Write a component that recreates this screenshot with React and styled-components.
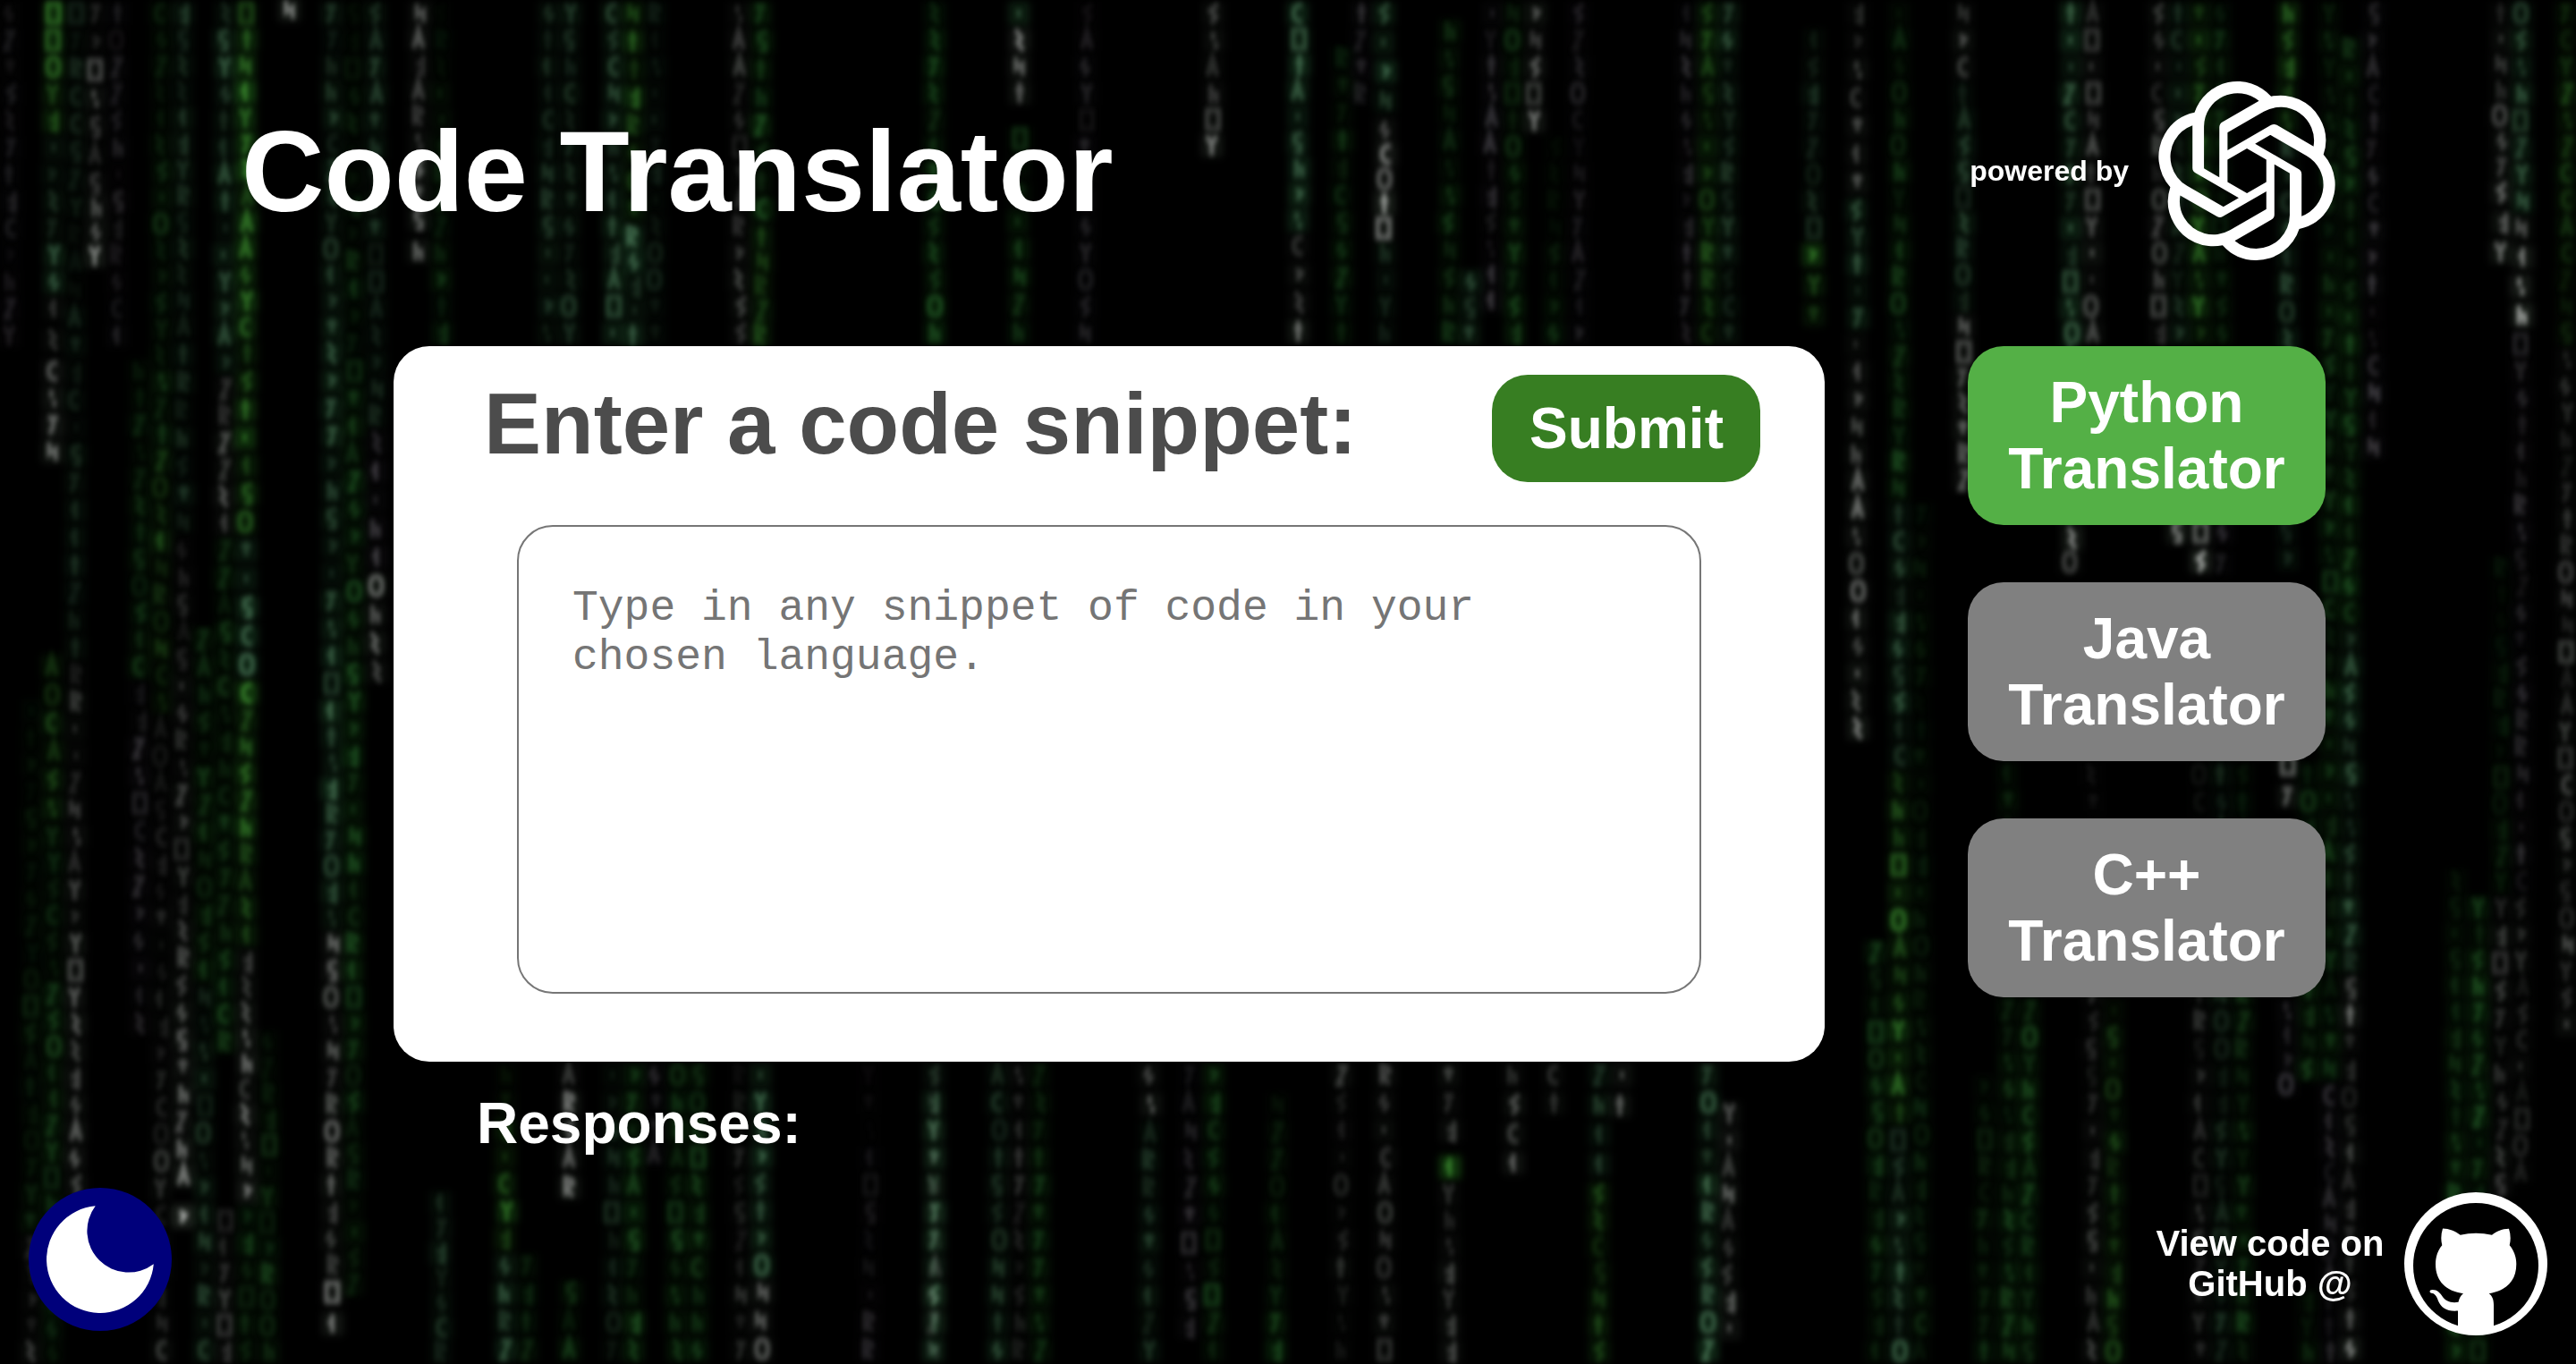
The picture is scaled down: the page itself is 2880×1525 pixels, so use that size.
import React, { useMemo } from 'react';
import styled, { createGlobalStyle } from 'styled-components';
import { SiOpenai } from 'react-icons/si';

const GlobalStyle = createGlobalStyle`
  * { box-sizing: border-box; }
  body {
    margin: 0;
    background: #000;
    font-family: "Liberation Sans", Arial, sans-serif;
    font-weight: 700;
    color: #fff;
  }
`;

const Page = styled.div`
  position: relative;
  isolation: isolate;
  display: flex;
  flex-direction: column;
  width: 2880px;
  height: 1525px;
  overflow: hidden;
`;

const RainCanvas = styled.svg`
  position: absolute;
  inset: 0;
  z-index: -1;
  width: 2880px;
  height: 1525px;
`;

const Header = styled.header`
  display: flex;
  align-items: center;
  justify-content: space-between;
  height: 387px;
  padding: 0 268px 5px 270px;
`;

const Title = styled.h1`
  margin: 0;
  padding-top: 1px;
  font-size: 128px;
  line-height: 147px;
`;

const PoweredBy = styled.div`
  display: flex;
  align-items: center;
  gap: 32px;
  font-size: 32px;
  line-height: 37px;
`;

const OpenAiLogo = styled(SiOpenai)`
  width: 200px;
  height: 200px;
`;

const Main = styled.main`
  display: flex;
  gap: 160px;
  padding-left: 440px;
`;

const Card = styled.section`
  display: flex;
  flex-direction: column;
  width: 1600px;
  height: 800px;
  padding: 32px 72px 0 98px;
  border-radius: 40px;
  background: #fff;
`;

const CardTop = styled.div`
  display: flex;
  justify-content: space-between;
  align-items: flex-start;
  height: 168px;
`;

const CardTitle = styled.h2`
  margin: 0;
  padding-left: 3px;
  font-size: 96px;
  line-height: 110px;
  color: #4c4c4c;
`;

const SubmitButton = styled.button`
  width: 300px;
  height: 120px;
  padding: 0 0 0 1px;
  border: 0;
  border-radius: 40px;
  background: #377e22;
  color: #fff;
  font: inherit;
  font-size: 64px;
`;

const CodeInput = styled.textarea`
  display: block;
  width: 1324px;
  height: 524px;
  margin: 0 0 0 40px;
  padding: 64px 60px 60px;
  border: 2px solid #767676;
  border-radius: 40px;
  background: #fff;
  resize: none;
  outline: none;
  overflow: hidden;
  font: 400 48px/55px "Courier New", "Liberation Mono", monospace;
  &::placeholder { color: #757575; opacity: 1; }
`;

const Languages = styled.nav`
  display: flex;
  flex-direction: column;
  gap: 64px;
`;

const LanguageButton = styled.button`
  width: 400px;
  height: 200px;
  padding: 0 40px;
  border: 0;
  border-radius: 40px;
  background: ${(p) => (p.$active ? '#54b046' : '#808080')};
  color: #fff;
  font: inherit;
  font-size: 64px;
  line-height: 74px;
`;

const Responses = styled.h3`
  margin: 32px 0 0 533px;
  font-size: 64px;
  line-height: 74px;
`;

const Footer = styled.footer`
  display: flex;
  justify-content: space-between;
  padding: 35px 32px 0;
`;

const ThemeToggle = styled.button`
  width: 160px;
  height: 160px;
  padding: 0;
  border: 0;
  border-radius: 50%;
  background: #00007b;
  svg { display: block; }
`;

const RepoLink = styled.a`
  display: flex;
  align-items: center;
  gap: 22px;
  height: 160px;
  margin-top: 5px;
`;

const RepoText = styled.span`
  width: 256px;
  font-size: 40px;
  line-height: 45px;
  text-align: center;
`;

/* Tints of the falling characters */
const TINT = {
  g: '#3c8a30',
  t: '#4d7a5a',
  d: '#245c28',
  w: '#b4b6b4',
  p: '#7c7880',
};

/* Glow behind the characters */
const GLOW = {
  g: '#1c5a16',
  t: '#1b4426',
  d: '#0f3c10',
  w: '#2a322a',
  p: '#1c1a20',
};

/* [x, [top, bottom, tint, opacity at top, opacity at bottom], ...] */
const STREAMS = [
  [11, [0, 390, 'p', 0.3, 0.25]],
  [35, [1380, 1525, 'w', 0.2, 0.4], [780, 1380, 'd', 0.15, 0.4]],
  [59, [0, 150, 'g', 0.9, 0.7], [150, 330, 't', 0.5, 0.6], [330, 400, 'w', 0.5, 0.6], [400, 520, 'w', 0.8, 1.1], [730, 920, 'g', 0.3, 0.6], [920, 1390, 'd', 0.5, 0.6], [1390, 1525, 'd', 0.5, 0.3]],
  [84, [0, 340, 't', 0.3, 0.15], [340, 740, 't', 0.25, 0.5], [740, 1340, 'w', 0.3, 0.65]],
  [107, [0, 190, 'w', 0.3, 0.5], [190, 298, 'w', 0.65, 1.05]],
  [131, [0, 390, 'p', 0.25, 0.35]],
  [156, [400, 760, 'd', 0.3, 0.5], [760, 1160, 'p', 0.4, 0.45]],
  [180, [0, 500, 'd', 0.3, 0.6], [500, 800, 'g', 0.5, 0.3], [800, 1525, 'w', 0.15, 0.35]],
  [204, [0, 350, 't', 0.4, 0.3], [350, 600, 't', 0.25, 0.5], [600, 1330, 'w', 0.2, 0.7], [1345, 1375, 'w', 1.5, 1.5]],
  [228, [700, 1100, 'd', 0.4, 0.6], [1100, 1525, 't', 0.4, 0.5]],
  [251, [0, 420, 't', 0.65, 0.55], [420, 600, 'w', 0.5, 0.6], [600, 1180, 'd', 0.5, 0.6], [1350, 1525, 'w', 0.3, 0.5]],
  [275, [0, 380, 'g', 0.95, 0.8], [380, 600, 'g', 0.75, 0.9], [600, 760, 't', 0.8, 0.8], [760, 1060, 'g', 0.95, 0.6], [1060, 1345, 'w', 0.5, 0.7], [1345, 1525, 'd', 0.6, 0.5]],
  [300, [1150, 1525, 'd', 0.2, 0.7]],
  [323, [-4, 26, 'w', 1.1, 1.1]],
  [371, [0, 380, 't', 0.4, 0.55], [380, 780, 't', 0.6, 0.75], [780, 1040, 't', 0.8, 0.6], [1040, 1430, 'w', 0.7, 0.4], [1430, 1500, 'w', 0.85, 1.05]],
  [395, [0, 400, 'd', 0.2, 0.5], [400, 800, 'd', 0.7, 0.7], [800, 1100, 'd', 0.9, 0.6], [1100, 1450, 'd', 0.6, 0.3]],
  [420, [0, 480, 't', 0.45, 0.3], [480, 640, 'p', 0.5, 0.6], [640, 768, 'w', 0.7, 0.9]],
  [468, [0, 230, 'w', 0.5, 0.7], [230, 302, 'w', 0.55, 0.8]],
  [493, [0, 387, 'd', 0.15, 0.6], [1330, 1525, 't', 0.5, 0.4]],
  [565, [1187, 1400, 'g', 0.15, 0.8], [1400, 1525, 't', 0.7, 0.6]],
  [589, [1400, 1525, 'd', 0.3, 0.5]],
  [612, [0, 387, 't', 0.35, 0.45]],
  [637, [0, 387, 't', 0.4, 0.5], [1187, 1280, 'w', 0.6, 0.7], [1280, 1345, 'w', 0.75, 1]],
  [637, [1430, 1525, 'd', 0.4, 0.6]],
  [685, [0, 387, 't', 0.45, 0.65], [1187, 1525, 't', 0.4, 0.25]],
  [708, [0, 250, 'g', 0.5, 0.75], [250, 387, 't', 0.9, 0.6], [1187, 1525, 'd', 0.6, 0.75]],
  [732, [0, 387, 't', 0.2, 0.3], [1187, 1305, 'p', 0.5, 0.4]],
  [756, [1187, 1525, 'd', 0.6, 0.7]],
  [780, [1187, 1525, 'd', 0.6, 0.6]],
  [827, [0, 387, 'w', 0.3, 0.4], [1187, 1525, 'w', 0.15, 0.3]],
  [851, [0, 250, 'd', 0.7, 0.8], [250, 387, 'g', 0.7, 0.6], [1187, 1430, 't', 0.7, 0.75], [1430, 1525, 'w', 0.5, 0.65]],
  [972, [1187, 1525, 'p', 0.1, 0.35]],
  [1044, [0, 387, 'd', 0.6, 0.75], [1187, 1525, 't', 0.6, 0.95], [1187, 1525, 'w', 0.2, 0.25]],
  [1116, [1187, 1525, 't', 0.35, 0.5]],
  [1139, [0, 30, 't', 0.9, 0.8], [30, 118, 'w', 0.85, 1], [140, 387, 'd', 0.5, 0.6], [1187, 1525, 'w', 0.3, 0.15]],
  [1162, [1187, 1525, 'd', 0.4, 0.7]],
  [1214, [0, 387, 'p', 0.25, 0.45]],
  [1285, [1187, 1252, 'w', 0.5, 0.7], [1252, 1525, 't', 0.35, 0.5]],
  [1330, [1187, 1500, 'p', 0.4, 0.45]],
  [1356, [0, 90, 'w', 0.45, 0.5], [90, 176, 'w', 0.6, 1.1], [1187, 1525, 'd', 0.6, 0.5]],
  [1427, [1220, 1525, 'd', 0.2, 0.7]],
  [1452, [0, 260, 't', 0.8, 0.7], [260, 387, 'w', 0.5, 0.6]],
  [1500, [50, 387, 'd', 0.4, 0.6], [1187, 1525, 'w', 0.35, 0.2]],
  [1522, [0, 120, 'p', 0.5, 0.2]],
  [1548, [0, 130, 't', 0.8, 0.7], [130, 268, 'w', 0.6, 1.05], [268, 387, 't', 0.4, 0.2], [1187, 1525, 'w', 0.35, 0.4]],
  [1620, [20, 387, 'd', 0.5, 0.5], [1187, 1280, 'w', 0.4, 0.5], [1290, 1320, 'g', 0.9, 0.9], [1320, 1525, 'w', 0.25, 0.65]],
  [1643, [300, 387, 't', 0.5, 0.5]],
  [1667, [0, 350, 'p', 0.35, 0.45]],
  [1692, [0, 387, 'd', 0.5, 0.6], [1187, 1318, 'w', 0.4, 0.6]],
  [1716, [0, 60, 'w', 0.45, 0.5], [60, 150, 'w', 0.6, 1.05]],
  [1738, [1187, 1250, 'w', 0.4, 0.35], [150, 387, 'd', 0.1, 0.5]],
  [1765, [0, 387, 'p', 0.25, 0.3]],
  [1788, [1187, 1320, 't', 0.4, 0.4], [1320, 1525, 'g', 0.4, 0.5]],
  [1812, [1187, 1255, 'w', 0.4, 0.6]],
  [1885, [0, 387, 'p', 0.35, 0.35]],
  [1909, [0, 387, 'g', 0.45, 0.5], [1187, 1525, 't', 0.7, 0.9]],
  [1932, [0, 387, 't', 0.55, 0.35], [1230, 1500, 'w', 0.6, 0.5]],
  [2027, [30, 270, 't', 0.4, 0.4], [270, 370, 'g', 0.7, 0.5]],
  [2076, [0, 220, 'w', 0.4, 0.45], [220, 370, 't', 0.6, 0.55], [370, 830, 'w', 0.5, 0.85]],
  [2098, [1050, 1525, 'd', 0.5, 0.5]],
  [2123, [0, 560, 'd', 0.4, 0.7], [560, 860, 't', 0.5, 0.65], [860, 1260, 'g', 0.75, 0.7], [1260, 1525, 't', 0.6, 0.7]],
  [2147, [560, 1525, 'd', 0.2, 0.4]],
  [2195, [0, 90, 'w', 0.4, 0.7], [90, 350, 't', 0.4, 0.5], [350, 550, 'w', 0.45, 0.7]],
  [2218, [1200, 1525, 'd', 0.2, 0.6]],
  [2245, [850, 1525, 'd', 0.3, 0.7]],
  [2268, [1115, 1525, 'd', 0.65, 0.6]],
  [2315, [0, 300, 't', 0.75, 0.6], [300, 587, 't', 0.7, 0.6], [587, 640, 'w', 0.7, 1]],
  [2339, [0, 387, 'w', 0.45, 0.5], [851, 1525, 'w', 0.15, 0.35]],
  [2363, [1115, 1525, 'g', 0.35, 0.5]],
  [2413, [0, 387, 'w', 0.35, 0.35]],
  [2435, [0, 387, 't', 0.45, 0.4], [580, 612, 'w', 0.8, 0.8]],
  [2459, [0, 387, 'g', 0.6, 0.65], [580, 645, 'w', 0.9, 1.2], [851, 1525, 'w', 0.2, 0.35]],
  [2483, [0, 387, 'd', 0.5, 0.3], [580, 650, 'p', 0.4, 0.3], [851, 1525, 't', 0.3, 0.35]],
  [2507, [851, 1525, 'd', 0.4, 0.6]],
  [2557, [0, 150, 'g', 0.8, 0.6], [150, 640, 't', 0.5, 0.45], [840, 910, 'w', 0.75, 0.9], [1115, 1225, 'p', 0.45, 0.4]],
  [2580, [851, 1210, 'd', 0.4, 0.6], [1440, 1525, 'd', 0.4, 0.4]],
  [2604, [0, 1210, 'd', 0.5, 0.5], [1210, 1525, 'p', 0.4, 0.35]],
  [2627, [40, 700, 'd', 0.6, 0.7], [700, 1090, 't', 0.6, 0.75], [1090, 1150, 'w', 0.7, 0.6], [1150, 1460, 'w', 0.35, 0.4], [1460, 1525, 'w', 0.6, 0.7]],
  [2653, [0, 515, 'p', 0.35, 0.5]],
  [2745, [970, 1525, 'd', 0.3, 0.8]],
  [2771, [1000, 1525, 'd', 0.7, 0.7]],
  [2796, [0, 200, 'w', 0.3, 0.5], [200, 300, 'w', 0.6, 0.8], [620, 1000, 'd', 0.2, 0.3], [1000, 1340, 'w', 0.3, 0.3]],
  [2819, [0, 240, 't', 0.6, 0.8], [240, 370, 'w', 0.6, 1], [370, 1000, 'p', 0.35, 0.4], [1000, 1325, 'w', 0.25, 0.3]],
  [2869, [0, 387, 'g', 0.4, 0.3], [387, 1160, 'w', 0.25, 0.4]],
];

/* Single-stroke marks inside a 14 x 20 cell */
const MARKS = [
  'M1 2H13V18H1Z',
  'M3 3H11L3 18H9',
  'M3 1L9 8L5 12L11 19',
  'M7 1V19M3 8H11',
  'M2 7H12M7 3V15',
  'M2 18L7 2L12 18M4 12H10',
  'M12 2L4 4V10L10 12V18H4',
  'M7 7V13M5 10H9',
  'M4 2V12L11 8V18',
  'M2 4H12M7 4Q8 14 3 18',
  'M12 3Q3 2 3 10T12 17',
  'M2 2L7 10L12 2M7 10V19',
  'M8 3L4 10L10 12L6 18',
  'M4 2V18M4 10H10V18',
  'M11 2V18L5 16M11 9H4',
  'M7 2V18M7 6L3 11',
  'M7 2Q13 2 13 10T7 18T1 10T7 2Z',
  'M3 18V2L10 4L11 7L4 11L11 18',
  'M12 2L4 8L10 13L5 19',
  'M6 3V10M9 12V18',
  'M4 6L10 9L5 15',
];

const ROW = 30;

function buildMarks() {
  let seed = 9173;
  const rand = () => {
    seed = (seed * 16807) % 2147483647;
    return seed / 2147483647;
  };
  const marks = [];
  STREAMS.forEach(([x, ...runs]) => {
    runs.forEach(([top, bottom, tint, from, to]) => {
      const rows = Math.max(1, Math.round((bottom - top) / ROW));
      const pitch = (bottom - top) / rows;
      for (let i = 0; i < rows; i += 1) {
        const base = from + ((to - from) * i) / rows;
        marks.push({
          x: x - 7.5 + (rand() - 0.5) * 3,
          y: top + i * pitch + 2,
          d: MARKS[Math.floor(rand() * MARKS.length)],
          tint: TINT[tint],
          glow: GLOW[tint],
          opacity: Math.min(1, base * (0.35 + rand() * 0.55)),
        });
      }
    });
  });
  return marks;
}

function Rain() {
  const marks = useMemo(buildMarks, []);
  return (
    <RainCanvas viewBox="0 0 2880 1525" aria-hidden="true">
      <defs>
        <filter id="soft" x="0" y="0" width="2880" height="1525" filterUnits="userSpaceOnUse" colorInterpolationFilters="sRGB">
          <feGaussianBlur stdDeviation="2.7 3.1" />
        </filter>
        <filter id="haze" x="0" y="0" width="2880" height="1525" filterUnits="userSpaceOnUse" colorInterpolationFilters="sRGB">
          <feGaussianBlur stdDeviation="4 4.500" />
        </filter>
      </defs>
      <rect width="2880" height="1525" fill="#000" />
      <g filter="url(#haze)">
        {marks.map((m, i) => (
          <rect key={i} x={m.x - 4} y={m.y} width="24" height="26" fill={m.glow} opacity={m.opacity * 0.8} />
        ))}
      </g>
      <g filter="url(#soft)" fill="none" strokeWidth="4.4">
        {marks.map((m, i) => (
          <path key={i} d={m.d} transform={`translate(${m.x} ${m.y}) scale(1.08 1.28)`} stroke={m.tint} opacity={m.opacity} />
        ))}
      </g>
    </RainCanvas>
  );
}

function Moon() {
  return (
    <svg width="160" height="160" viewBox="0 0 160 160" aria-hidden="true">
      <path fill="#fff" d="M74.7 20.2A60 60 0 1 0 139.8 85.3A46.5 46.5 0 0 1 74.7 20.2Z" />
    </svg>
  );
}

function Octocat() {
  return (
    <svg width="160" height="160" viewBox="0 0 160 160" aria-hidden="true">
      <circle cx="80" cy="80" r="80" fill="#fff" />
      <circle cx="80" cy="82" r="70" fill="#000" />
      <path
        fill="#fff"
        d="M43 40.5C50 40.5 57 43.5 62.7 47.8Q80 43.8 98 47.8C103.500 43.500 110 40.700 117 40.700Q120 50 117.700 59.300C122.500 65 125.300 72 125.300 80.300C125.300 100 113 110.500 94.700 113.200C98.500 116 100 120 100 126V153H60V132.500C48 133.500 41.500 129.500 38 121.500C36 115.500 33.500 113 30.500 112.800C27.500 112 28 109 31.500 109C37 109 40 112.500 43 117C47 122 52 124 60.500 122.800C61.500 118.500 63 115.500 66 113.200C47 110.500 35 100 35 80.300C35 72 37.500 65 42.300 59.300Q40 50 43 40.500Z"
      />
    </svg>
  );
}

const LANGUAGES = ['Python', 'Java', 'C++'];

export default function App() {
  return (
    <Page>
      <GlobalStyle />
      <Rain />
      <Header>
        <Title>Code Translator</Title>
        <PoweredBy>
          <span>powered by</span>
          <OpenAiLogo />
        </PoweredBy>
      </Header>
      <Main>
        <Card>
          <CardTop>
            <CardTitle>Enter a code snippet:</CardTitle>
            <SubmitButton>Submit</SubmitButton>
          </CardTop>
          <CodeInput placeholder="Type in any snippet of code in your chosen language." />
        </Card>
        <Languages>
          {LANGUAGES.map((name, i) => (
            <LanguageButton key={name} $active={i === 0}>
              {name} Translator
            </LanguageButton>
          ))}
        </Languages>
      </Main>
      <Responses>Responses:</Responses>
      <Footer>
        <ThemeToggle aria-label="Toggle theme">
          <Moon />
        </ThemeToggle>
        <RepoLink>
          <RepoText>View code on GitHub @</RepoText>
          <Octocat />
        </RepoLink>
      </Footer>
    </Page>
  );
}
